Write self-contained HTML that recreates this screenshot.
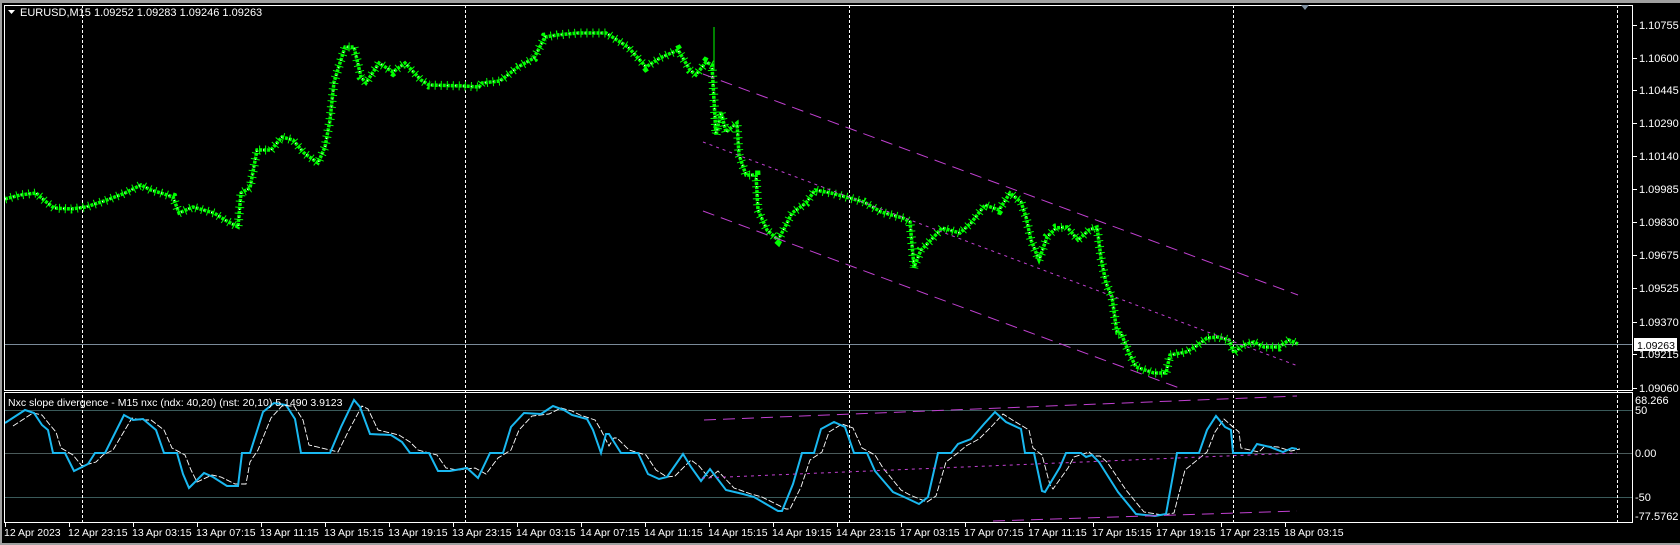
<!DOCTYPE html>
<html><head><meta charset="utf-8">
<style>
html,body{margin:0;padding:0;background:#000;width:1680px;height:545px;overflow:hidden}
svg{display:block}
text{font-family:"Liberation Sans",sans-serif;font-size:11px;fill:#fff}
.t{font-size:10.5px}
</style></head>
<body>
<svg width="1680" height="545" viewBox="0 0 1680 545" xmlns="http://www.w3.org/2000/svg">
<defs>
<polyline id="pp" points="5,199 20,195 36,193 45,201 54,208 71,209 86,207 107,200 125,193 141,185 151,190 161,193 173,197 179,213 193,207 214,213 225,220 238,227 241,193 250,188 257,150 271,150 282,137 293,140 304,153 318,163 325,147 330,120 334,82 345,47 354,47 361,77 366,83 379,63 393,72 405,63 421,80 429,85 464,86 479,87 482,83 500,81 518,67 534,58 545,37 557,35 578,33 606,33 628,47 646,67 660,58 678,50 690,70 696,75 706,62 712,65 716,135 721,112 726,132 737,123 739,155 746,175 756,175 758,210 767,230 778,240 785,227 792,213 806,203 815,190 831,193 846,197 864,202 881,212 903,218 910,222 914,267 921,250 931,240 942,228 960,233 971,223 985,205 999,210 1010,193 1021,202 1026,217 1031,240 1039,260 1047,237 1056,228 1067,227 1078,240 1089,230 1097,227 1101,258 1106,283 1112,297 1117,333 1121,333 1129,353 1136,367 1154,373 1166,373 1170,355 1186,352 1195,347 1207,338 1218,337 1229,340 1234,353 1243,345 1254,342 1264,347 1279,347 1289,340 1298,344"/>
</defs>
<rect x="0" y="0" width="1680" height="545" fill="#000"/>
<rect x="0" y="0" width="1680" height="3" fill="#a0a0a0"/>
<rect x="0" y="0" width="2" height="545" fill="#a0a0a0"/>
<rect x="0" y="543" width="1680" height="2" fill="#a0a0a0"/>
<g shape-rendering="crispEdges">
<line x1="5" y1="410.5" x2="1632" y2="410.5" stroke="#3a5a5a"/>
<line x1="5" y1="453.5" x2="1632" y2="453.5" stroke="#4a5a5a"/>
<line x1="5" y1="497.5" x2="1632" y2="497.5" stroke="#3a5a5a"/>
<line x1="5" y1="344.5" x2="1632" y2="344.5" stroke="#7a8a99"/>
<g stroke="#fff" stroke-dasharray="3,2">
<line x1="82.5" y1="5" x2="82.5" y2="522"/>
<line x1="465.5" y1="5" x2="465.5" y2="522"/>
<line x1="849.5" y1="5" x2="849.5" y2="522"/>
<line x1="1233.5" y1="5" x2="1233.5" y2="522"/>
<line x1="1617.5" y1="5" x2="1617.5" y2="522"/>
</g>
</g>
<g fill="none">
<use href="#pp" stroke="#00ff00" stroke-width="9" stroke-dasharray="1,5"/>
<use href="#pp" stroke="#00ff00" stroke-width="3.5" stroke-dasharray="3,1"/>
<use href="#pp" stroke="#ffffff" stroke-width="1.2" stroke-dasharray="1,7"/>
<line x1="714" y1="27" x2="714" y2="70" stroke="#00ff00" stroke-width="1"/>
</g>
<g stroke="#c040d0" fill="none">
<line x1="703" y1="74" x2="1298" y2="295" stroke-dasharray="12,7"/>
<line x1="703" y1="142" x2="1298" y2="366" stroke-dasharray="3,4"/>
<line x1="703" y1="211" x2="1182" y2="389" stroke-dasharray="12,7"/>
</g>
<g fill="none">
<polyline transform="translate(8,0)" stroke="#fff" stroke-width="0.9" stroke-dasharray="6,2" points="5,426 25,413 34,415 42,425 48,432 53,448 65,455 74,466 88,462 95,455 105,450 124,418 133,420 143,420 156,430 164,448 177,455 183,470 189,482 204,475 213,477 227,484 238,484 242,462 250,450 263,418 274,406 286,406 295,420 301,445 330,452 341,430 354,406 360,409 370,430 391,435 402,442 410,450 429,455 438,468 450,470 467,468 478,474 490,458 503,450 511,430 524,416 541,414 553,408 564,411 572,415 587,420 593,430 601,446 606,438 609,438 621,450 638,455 648,470 659,477 667,476 683,460 691,466 701,478 710,471 726,488 743,494 754,497 778,509 782,509 793,487 802,460 814,452 821,432 834,424 845,428 854,448 867,455 875,468 893,490 902,495 919,502 928,496 938,462 951,452 958,446 971,439 984,426 995,414 1006,421 1021,430 1025,448 1034,455 1042,485 1045,489 1060,468 1066,457 1081,452 1086,456 1092,456 1099,462 1118,490 1136,512 1155,515 1166,513 1177,470 1199,452 1207,432 1216,419 1225,427 1231,432 1233,448 1251,452 1257,446 1270,447 1283,451 1292,449"/>
<polyline stroke="#1ab8f0" stroke-width="2" points="5,423 25,410 34,413 42,425 48,430 53,453 65,453 74,471 88,464 95,453 105,453 124,415 133,420 143,419 156,430 164,453 177,453 183,474 189,488 204,473 213,477 227,486 238,486 242,453 250,453 263,412 274,403 286,405 295,419 301,453 330,453 341,427 354,400 360,407 370,434 391,435 402,442 410,453 429,453 438,471 450,471 467,468 478,478 490,453 503,453 511,427 524,413 541,414 553,406 564,410 572,415 587,419 593,430 601,453 606,434 609,434 621,453 638,453 648,474 659,479 667,477 683,454 691,467 701,481 710,469 726,490 743,494 754,497 778,511 782,511 793,484 802,453 814,453 821,429 834,422 845,427 854,453 867,453 875,471 893,492 902,496 919,504 928,497 938,453 951,453 958,444 971,439 984,424 995,412 1006,422 1021,429 1025,453 1034,453 1042,491 1045,492 1060,467 1066,453 1081,453 1086,457 1092,455 1099,462 1118,492 1136,514 1155,516 1166,514 1177,453 1199,453 1207,430 1216,416 1225,427 1231,430 1233,453 1251,453 1257,444 1270,447 1283,452 1292,448 1297,449"/>
</g>
<g stroke="#c040d0" fill="none">
<line x1="704" y1="420" x2="1297" y2="396" stroke-dasharray="12,7"/>
<line x1="702" y1="478" x2="1297" y2="453" stroke-dasharray="3,4"/>
<line x1="993" y1="521" x2="1297" y2="511" stroke-dasharray="12,7"/>
</g>
<g shape-rendering="crispEdges">
<rect x="4.5" y="5.5" width="1628" height="385" fill="none" stroke="#fff"/>
<rect x="4.5" y="392.5" width="1628" height="130" fill="none" stroke="#fff"/>
</g>
<polygon points="1301,5 1309,5 1305,10" fill="#8090a0"/>
<polygon points="8,10 15,10 11.5,14" fill="#fff"/>
<text x="20" y="16">EURUSD,M15  1.09252 1.09283 1.09246 1.09263</text>
<text x="8" y="406" class="t">Nxc slope divergence - M15 nxc (ndx: 40,20) (nst: 20,10) 5.1490 3.9123</text>
<g stroke="#fff" shape-rendering="crispEdges">
<line x1="1633" y1="25.5" x2="1637" y2="25.5"/><line x1="1633" y1="58.5" x2="1637" y2="58.5"/><line x1="1633" y1="90.5" x2="1637" y2="90.5"/><line x1="1633" y1="123.5" x2="1637" y2="123.5"/><line x1="1633" y1="156.5" x2="1637" y2="156.5"/><line x1="1633" y1="189.5" x2="1637" y2="189.5"/><line x1="1633" y1="222.5" x2="1637" y2="222.5"/><line x1="1633" y1="255.5" x2="1637" y2="255.5"/><line x1="1633" y1="288.5" x2="1637" y2="288.5"/><line x1="1633" y1="322.5" x2="1637" y2="322.5"/><line x1="1633" y1="354.5" x2="1637" y2="354.5"/><line x1="1633" y1="388.5" x2="1637" y2="388.5"/>
</g>
<text x="1639" y="29">1.10755</text><text x="1639" y="62">1.10600</text><text x="1639" y="94">1.10445</text><text x="1639" y="127">1.10290</text><text x="1639" y="160">1.10140</text><text x="1639" y="193">1.09985</text><text x="1639" y="226">1.09830</text><text x="1639" y="259">1.09675</text><text x="1639" y="292">1.09525</text><text x="1639" y="326">1.09370</text><text x="1639" y="358">1.09215</text><text x="1639" y="392">1.09060</text>
<rect x="1634" y="338" width="43" height="13" fill="#fff"/><text x="1637" y="349" style="fill:#000;font-size:10.5px">1.09263</text>
<text x="1635" y="404">68.266</text><text x="1635" y="414">50</text><text x="1635" y="457">0.00</text><text x="1635" y="501">-50</text><text x="1635" y="520">-77.5762</text>
<g stroke="#fff" shape-rendering="crispEdges">
<line x1="5.5" y1="523" x2="5.5" y2="527"/><line x1="69.5" y1="523" x2="69.5" y2="527"/><line x1="133.5" y1="523" x2="133.5" y2="527"/><line x1="197.5" y1="523" x2="197.5" y2="527"/><line x1="261.5" y1="523" x2="261.5" y2="527"/><line x1="325.5" y1="523" x2="325.5" y2="527"/><line x1="389.5" y1="523" x2="389.5" y2="527"/><line x1="453.5" y1="523" x2="453.5" y2="527"/><line x1="517.5" y1="523" x2="517.5" y2="527"/><line x1="581.5" y1="523" x2="581.5" y2="527"/><line x1="645.5" y1="523" x2="645.5" y2="527"/><line x1="709.5" y1="523" x2="709.5" y2="527"/><line x1="773.5" y1="523" x2="773.5" y2="527"/><line x1="837.5" y1="523" x2="837.5" y2="527"/><line x1="901.5" y1="523" x2="901.5" y2="527"/><line x1="965.5" y1="523" x2="965.5" y2="527"/><line x1="1029.5" y1="523" x2="1029.5" y2="527"/><line x1="1093.5" y1="523" x2="1093.5" y2="527"/><line x1="1157.5" y1="523" x2="1157.5" y2="527"/><line x1="1221.5" y1="523" x2="1221.5" y2="527"/><line x1="1285.5" y1="523" x2="1285.5" y2="527"/>
</g>
<g>
<text x="4" y="536" class="t">12 Apr 2023</text><text x="68" y="536" class="t">12 Apr 23:15</text><text x="132" y="536" class="t">13 Apr 03:15</text><text x="196" y="536" class="t">13 Apr 07:15</text><text x="260" y="536" class="t">13 Apr 11:15</text><text x="324" y="536" class="t">13 Apr 15:15</text><text x="388" y="536" class="t">13 Apr 19:15</text><text x="452" y="536" class="t">13 Apr 23:15</text><text x="516" y="536" class="t">14 Apr 03:15</text><text x="580" y="536" class="t">14 Apr 07:15</text><text x="644" y="536" class="t">14 Apr 11:15</text><text x="708" y="536" class="t">14 Apr 15:15</text><text x="772" y="536" class="t">14 Apr 19:15</text><text x="836" y="536" class="t">14 Apr 23:15</text><text x="900" y="536" class="t">17 Apr 03:15</text><text x="964" y="536" class="t">17 Apr 07:15</text><text x="1028" y="536" class="t">17 Apr 11:15</text><text x="1092" y="536" class="t">17 Apr 15:15</text><text x="1156" y="536" class="t">17 Apr 19:15</text><text x="1220" y="536" class="t">17 Apr 23:15</text><text x="1284" y="536" class="t">18 Apr 03:15</text>
</g>
</svg>
</body></html>
